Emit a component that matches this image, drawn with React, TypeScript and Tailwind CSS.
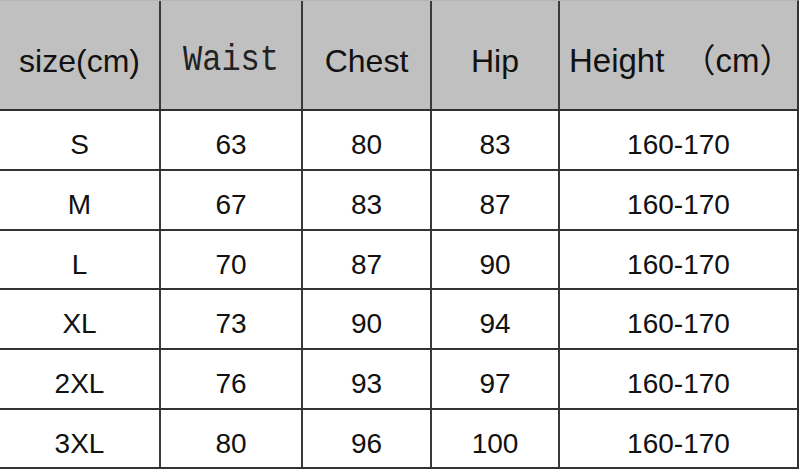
import React from 'react';

const rows = [
  ['S', '63', '80', '83', '160-170'],
  ['M', '67', '83', '87', '160-170'],
  ['L', '70', '87', '90', '160-170'],
  ['XL', '73', '90', '94', '160-170'],
  ['2XL', '76', '93', '97', '160-170'],
  ['3XL', '80', '96', '100', '160-170'],
];

const rowHeights = ['h-[60px]', 'h-[60px]', 'h-[59px]', 'h-[60px]', 'h-[60px]', 'h-[59px]'];

const widths = ['w-[161px]', 'w-[142px]', 'w-[129px]', 'w-[128px]', 'flex-1'];

const sans = "font-['Liberation_Sans','Noto_Sans_CJK_SC',sans-serif]";

export default function App() {
  return (
    <div className={`w-[800px] h-[471px] bg-white overflow-hidden text-[#111] ${sans}`}>
      <div className="border-t border-[#b5b5b5] border-r-2 border-r-[#333] mr-[1px]">
        {/* header */}
        <div className="flex h-[110px] bg-[#c0c0c0] border-b-2 border-[#2e2e2e]">
          <div className={`${widths[0]} flex items-center justify-center border-r-2 border-[#3a3a3a] text-[32px] pt-[12px]`}>
            size(cm)
          </div>
          <div className={`${widths[1]} flex items-center justify-center border-r-2 border-[#3a3a3a] pt-[12px]`}>
            <span className="font-['Liberation_Mono',monospace] text-[32px] inline-block scale-y-[1.18] text-[#222]">Waist</span>
          </div>
          <div className={`${widths[2]} flex items-center justify-center border-r-2 border-[#3a3a3a] text-[32px] pt-[12px]`}>
            Chest
          </div>
          <div className={`${widths[3]} flex items-center justify-center border-r-2 border-[#3a3a3a] text-[32px] pt-[12px]`}>
            Hip
          </div>
          <div className={`${widths[4]} flex items-center pl-[9px] text-[33px] pt-[12px]`}>
            <span>Height</span>
            <span className="ml-[18px]">（cm）</span>
          </div>
        </div>

        {/* data rows */}
        {rows.map((r, i) => (
          <div key={i} className={`flex ${rowHeights[i]} border-b-2 border-[#333]`}>
            {r.map((c, j) => (
              <div
                key={j}
                className={`${widths[j]} flex items-center justify-center text-[28px] pt-[10px] ${j < 4 ? 'border-r-2 border-[#3a3a3a]' : ''}`}
              >
                {c}
              </div>
            ))}
          </div>
        ))}
      </div>
    </div>
  );
}
